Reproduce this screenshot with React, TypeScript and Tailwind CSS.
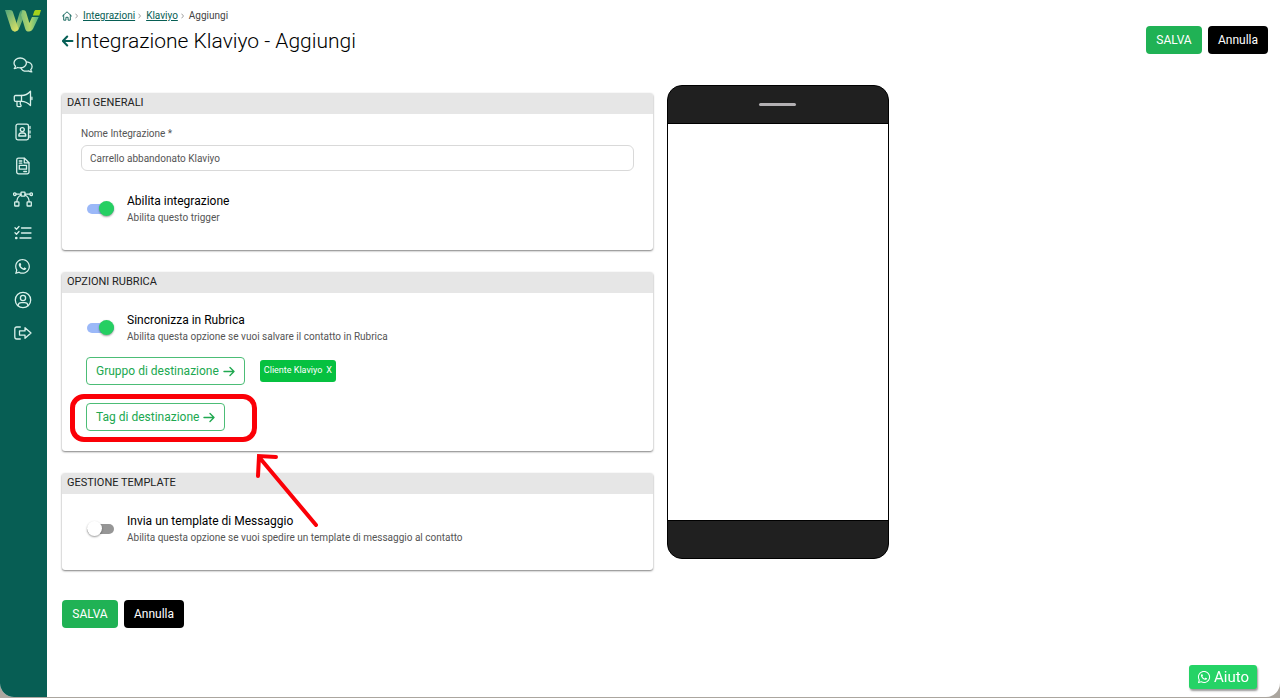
import { useState } from "react";
import type { ReactNode } from "react";
import { FaWhatsapp } from "react-icons/fa6";

const strokeProps = {
  viewBox: "0 0 20 20",
  width: 20,
  height: 20,
  fill: "none",
  stroke: "currentColor",
  strokeWidth: 1.3,
  strokeLinecap: "round" as const,
  strokeLinejoin: "round" as const,
};

const menu: { label: string; icon: ReactNode }[] = [
  {
    label: "Chat",
    icon: (
      <svg {...strokeProps}>
        <path d="M7.200 3C3.700 3 1 5.200 1 8c0 1.300.6 2.400 1.500 3.300-.2.900-.7 1.600-1.200 2.200 1.300 0 2.500-.4 3.400-1 .8.300 1.600.4 2.500.4 3.500 0 6.200-2.200 6.200-4.900S10.700 3 7.200 3z" />
        <path d="M13.600 6.800c3.100.2 5.500 2.200 5.500 4.800 0 1.200-.5 2.300-1.400 3.100.2.900.6 1.600 1.100 2.200-1.300 0-2.400-.4-3.300-1-.8.200-1.500.3-2.200.3-2.500 0-4.600-1.300-5.400-3.300" />
      </svg>
    ),
  },
  {
    label: "Campagne",
    icon: (
      <svg {...strokeProps}>
        <path d="M2.500 6.500H8.500v5.800H2.500a1.200 1.200 0 0 1-1.200-1.200V7.700a1.200 1.200 0 0 1 1.200-1.200z" />
        <path d="M8.500 6.500c3.600 0 6.600-1.600 9-4.300v14.400c-2.400-2.700-5.400-4.300-9-4.300" />
        <path d="M4 12.300v4.300a1 1 0 0 0 1 1h2.300a.8.800 0 0 0 .7-1.200c-.9-1.300-1-2.600-.6-4.100M18.900 8.200v2.400" />
      </svg>
    ),
  },
  {
    label: "Rubrica",
    icon: (
      <svg {...strokeProps}>
        <rect x="3" y="2.200" width="12.500" height="15.600" rx="1.800" />
        <circle cx="9.300" cy="7.600" r="2" />
        <path d="M5.800 14c0-2 1.200-3 2.400-3h2.200c1.200 0 2.400 1 2.400 3zM17 4.500v2M17 9v2M17 13.500v2" />
      </svg>
    ),
  },
  {
    label: "Template",
    icon: (
      <svg {...strokeProps}>
        <path d="M5.500 2.200h6l4.500 4.500v9.300a1.800 1.800 0 0 1-1.800 1.800H5.500A1.800 1.800 0 0 1 3.700 16V4a1.800 1.800 0 0 1 1.800-1.800z" />
        <path d="M11.300 2.500v4.300h4.500M6.300 5h2.500M6.300 7.200h2.500M10.800 15.500h2.700" />
        <rect x="6.300" y="9.400" width="7.200" height="3.800" />
      </svg>
    ),
  },
  {
    label: "Flussi",
    icon: (
      <svg {...strokeProps}>
        <rect x="8" y="3.200" width="4" height="4" rx=".6" />
        <rect x="1.700" y="12.800" width="4.200" height="4.200" rx=".6" />
        <rect x="14.100" y="12.800" width="4.200" height="4.200" rx=".6" />
        <circle cx="1.800" cy="5.200" r="1.300" />
        <circle cx="18.200" cy="5.200" r="1.300" />
        <path d="M3.100 5.200H8M12 5.200h4.900M8 6c-2.400 1-4 3.500-4.200 6.800M12 6c2.400 1 4 3.500 4.200 6.800" />
      </svg>
    ),
  },
  {
    label: "Attività",
    icon: (
      <svg {...strokeProps}>
        <path d="M2 4.700l1.500 1.500L6 3.500M2 9.700l1.500 1.500L6 8.500M8.500 5H18M8.500 10H18M7 15h11" />
        <circle cx="3.300" cy="15" r=".7" fill="currentColor" />
      </svg>
    ),
  },
  { label: "WhatsApp", icon: <FaWhatsapp size={17} /> },
  {
    label: "Profilo",
    icon: (
      <svg {...strokeProps}>
        <circle cx="10" cy="10" r="7.700" />
        <circle cx="10" cy="8" r="2.600" />
        <path d="M5 15.600c.3-1.900 1.600-2.900 3.300-2.900h3.400c1.700 0 3 1 3.300 2.900" />
      </svg>
    ),
  },
  {
    label: "Esci",
    icon: (
      <svg {...strokeProps}>
        <path d="M7.300 4H3.700A1.900 1.900 0 0 0 1.800 5.900v8.200A1.900 1.900 0 0 0 3.700 16h3.600" />
        <path d="M12 4.700l6 5.300-6 5.300v-3.200H6.500V7.900H12z" />
      </svg>
    ),
  },
];

export default function App() {
  const [name, setName] = useState("Carrello abbandonato Klaviyo");
  const [groups, setGroups] = useState(["Cliente Klaviyo"]);

  return (
    <div className="bg-[#aba69f] pb-px font-[Roboto,sans-serif] text-black">
      <div className="flex min-h-[calc(100vh-1px)] overflow-hidden rounded-b-[14px] bg-white">
        <Sidebar />
        <main className="min-w-0 flex-1 pt-[9px] pr-3 pb-2 pl-[15px]">
          <header className="flex items-start justify-between">
            <div>
              <Breadcrumb />
              <div className="mt-1 flex items-center gap-px">
                <a href="#indietro" aria-label="Indietro" className="text-[#065f56]">
                  <svg viewBox="0 0 12 12" width="12" height="12" fill="none" stroke="currentColor" strokeWidth="2" strokeLinecap="round" strokeLinejoin="round">
                    <path d="M10.500 6H1.200M5.200 1.500L.9 6l4.300 4.500" />
                  </svg>
                </a>
                <h1 className="text-[21px] leading-7 font-light">Integrazione Klaviyo - Aggiungi</h1>
              </div>
            </div>
            <div className="pt-[17px]">
              <Actions />
            </div>
          </header>

          <div className="mt-[30px] flex items-start gap-[14px]">
            <form className="w-[49%] pt-2" onSubmit={(e) => e.preventDefault()}>
              <Card title="DATI GENERALI">
                <div className="px-[19px] pt-[13px] pb-[25px]">
                  <label htmlFor="name" className="block text-[10px] leading-[14px] text-[#555]">
                    Nome Integrazione *
                  </label>
                  <input
                    id="name"
                    value={name}
                    onChange={(e) => setName(e.target.value)}
                    className="mt-1 mb-[21px] block h-[26px] w-full rounded-md border border-[#d9d9d9] px-2 text-[10px] text-[#555]"
                  />
                  <Toggle id="enabled" title="Abilita integrazione" text="Abilita questo trigger" on />
                </div>
              </Card>

              <Card title="OPZIONI RUBRICA">
                <div className="px-[19px] pt-[18px] pb-5">
                  <Toggle id="sync" title="Sincronizza in Rubrica" text="Abilita questa opzione se vuoi salvare il contatto in Rubrica" on />
                  <div className="mt-[13px] ml-[5px] flex items-center gap-[15px]">
                    <OutlineButton>Gruppo di destinazione</OutlineButton>
                    {groups.map((group) => (
                      <button
                        key={group}
                        type="button"
                        onClick={() => setGroups(groups.filter((g) => g !== group))}
                        className="flex h-[22px] items-center gap-1 rounded-[3px] bg-[#06c140] px-1 text-[9px] text-white"
                      >
                        <span>{group}</span>
                        <span>X</span>
                      </button>
                    ))}
                  </div>
                  <div className="relative mt-[18px] ml-[5px] flex">
                    <OutlineButton>Tag di destinazione</OutlineButton>
                    <Highlight />
                  </div>
                </div>
              </Card>

              <Card title="GESTIONE TEMPLATE">
                <div className="px-[19px] pt-[18px] pb-[25px]">
                  <Toggle id="template" title="Invia un template di Messaggio" text="Abilita questa opzione se vuoi spedire un template di messaggio al contatto" />
                </div>
              </Card>

              <div className="pt-2">
                <Actions />
              </div>
            </form>
            <Phone />
          </div>
        </main>
      </div>
      <button
        type="button"
        className="fixed right-[23px] bottom-[9px] flex h-6 items-center gap-[3px] rounded-[3px] bg-[#25d366] px-2 text-[15px] text-white shadow-[1px_2px_2px_rgba(0,0,0,0.4)]"
      >
        <FaWhatsapp size={14} />
        Aiuto
      </button>
    </div>
  );
}

function Sidebar() {
  return (
    <aside className="flex w-[47px] shrink-0 flex-col items-center bg-[#075e54] pt-[10px] pr-[2px]">
      <Logo />
      <nav className="mt-[23px] flex h-[288px] flex-col justify-between text-[#d9f0ea]">
        {menu.map((item) => (
          <a key={item.label} href="#" aria-label={item.label} className="flex h-5 w-5 items-center justify-center">
            {item.icon}
          </a>
        ))}
      </nav>
    </aside>
  );
}

function Logo() {
  return (
    <svg viewBox="0 0 36 22" width="36" height="22" role="img" aria-label="Logo">
      <defs>
        <linearGradient id="logo-left" x1="0" y1="0" x2=".7" y2="1">
          <stop offset="0" stopColor="#4fa57c" />
          <stop offset="1" stopColor="#d2dd66" />
        </linearGradient>
        <linearGradient id="logo-mid" x1="0" y1="1" x2="1" y2="0">
          <stop offset="0" stopColor="#c3d968" />
          <stop offset="1" stopColor="#2f937a" />
        </linearGradient>
        <linearGradient id="logo-right" x1="0" y1="0" x2="1" y2="0">
          <stop offset="0" stopColor="#7fc07a" />
          <stop offset=".5" stopColor="#b5d76a" />
          <stop offset="1" stopColor="#4bb383" />
        </linearGradient>
      </defs>
      <path fill="url(#logo-mid)" d="M9 21.500L14.500 3C15.200 1 16.300 0 18 0l2 6-1.800 2.500L14 18.500c-.8 2.200-2.500 3-5 3z" />
      <path fill="url(#logo-right)" d="M17.500 0c2 0 3.200.7 3.700 2.500l3.200 10.500 2.600-6h6.700l-5.500 11.600c-1 2-2.500 3-4.300 3-2 0-3.200-1-3.800-3.200L16 5z" />
      <path fill="url(#logo-left)" d="M0 0h5c1.500 0 2.500.7 3 2.200l5.400 16.600c-.6 1.900-1.700 2.700-3.400 2.700-2 0-3.300-1-3.900-3z" />
      <path fill="#a4d21c" d="M31.300 0H36l-1.700 5.400h-6.500l1.200-3.500C29.400.6 30.100 0 31.300 0z" />
    </svg>
  );
}

function Breadcrumb() {
  return (
    <nav className="flex h-[14px] items-center gap-[3px] text-[10px] leading-[14px]">
      <a href="#home" aria-label="Home" className="text-[#075e54]">
        <svg viewBox="0 0 10 10" width="10" height="10" fill="none" stroke="currentColor" strokeWidth=".9" strokeLinecap="round" strokeLinejoin="round">
          <path d="M.5 5L5 .8 9.500 5M1.700 4v5.200h2.200V6.300h2.200v2.900h2.200V4" />
        </svg>
      </a>
      <Chevron />
      <a href="#integrazioni" className="ml-0.5 text-[#075e54] underline">Integrazioni</a>
      <Chevron />
      <a href="#klaviyo" className="ml-0.5 text-[#075e54] underline">Klaviyo</a>
      <Chevron />
      <span className="ml-0.5 text-[#444]">Aggiungi</span>
    </nav>
  );
}

function Chevron() {
  return (
    <svg viewBox="0 0 3 6" width="3" height="6" fill="none" stroke="#888" strokeWidth=".8">
      <path d="M.5.700L2.500 3 .5 5.300" />
    </svg>
  );
}

function Actions() {
  return (
    <div className="flex gap-[6px] text-[12px] text-white">
      <button type="submit" className="h-7 w-14 rounded bg-[#20b255]">SALVA</button>
      <button type="button" className="h-7 w-[60px] rounded bg-black">Annulla</button>
    </div>
  );
}

function Card({ title, children }: { title: string; children: ReactNode }) {
  return (
    <section className="mb-[22px] rounded-[3px] bg-white shadow-[0_1px_2px_rgba(0,0,0,0.5)]">
      <h2 className="h-[21px] rounded-t-[3px] bg-[#e6e6e6] px-[5px] text-[11px] leading-5 text-[#222]">{title}</h2>
      {children}
    </section>
  );
}

function Toggle({ id, title, text, on = false }: { id: string; title: string; text: string; on?: boolean }) {
  const [checked, setChecked] = useState(on);

  return (
    <div className="flex items-center gap-[13px] pl-[6px]">
      <input
        id={id}
        type="checkbox"
        role="switch"
        checked={checked}
        onChange={(e) => setChecked(e.target.checked)}
        className="flex h-[10px] w-[27px] shrink-0 appearance-none items-center rounded-full bg-[#969696] before:h-[15px] before:w-[15px] before:shrink-0 before:rounded-full before:bg-white before:shadow-[0_1px_2px_rgba(0,0,0,0.4)] checked:justify-end checked:bg-[#9bb8f8] checked:before:bg-[#25cf62]"
      />
      <label htmlFor={id}>
        <span className="block text-[12px] leading-[18px]">{title}</span>
        <span className="block text-[10px] leading-[15px] text-[#555]">{text}</span>
      </label>
    </div>
  );
}

function OutlineButton({ children }: { children: ReactNode }) {
  return (
    <button type="button" className="flex h-7 items-center gap-1 rounded border border-[#4cbd76] px-[9px] text-[12px] text-[#20a850]">
      {children}
      <svg viewBox="0 0 12 12" width="12" height="12" fill="none" stroke="currentColor" strokeWidth="1.400" strokeLinecap="round" strokeLinejoin="round">
        <path d="M1 6.500h10M7 2.500l4 4-4 4" />
      </svg>
    </button>
  );
}

// red marker around the tag button
function Highlight() {
  return (
    <div className="pointer-events-none absolute -top-[9px] -left-4 z-10 h-12 w-[187px] rounded-[14px] border-[5px] border-[#fb0007]">
      <svg viewBox="0 0 64 76" width="64" height="76" fill="none" stroke="#fb0007" strokeWidth="4" strokeLinecap="round" className="absolute top-[53px] left-[180px]">
        <path d="M61 73L4 5M3 24L4 4l17 1" />
      </svg>
    </div>
  );
}

function Phone() {
  return (
    <div className="flex h-[474px] w-[222px] shrink-0 flex-col overflow-hidden rounded-[15px] border border-black bg-[#202020]">
      <div className="flex h-[38px] items-center justify-center border-b border-black">
        <div className="h-[3px] w-[37px] rounded-full bg-[#b3b0b3]" />
      </div>
      <div className="flex-1 bg-white" />
      <div className="h-[38px] border-t border-black" />
    </div>
  );
}
